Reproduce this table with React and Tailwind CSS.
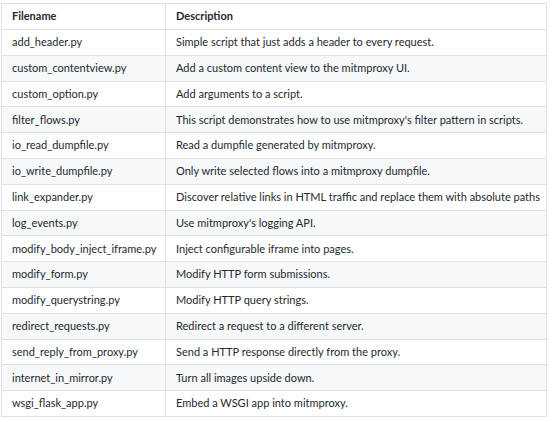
const rows = [
  ['add_header.py', 'Simple script that just adds a header to every request.'],
  ['custom_contentview.py', 'Add a custom content view to the mitmproxy UI.'],
  ['custom_option.py', 'Add arguments to a script.'],
  ['filter_flows.py', "This script demonstrates how to use mitmproxy's filter pattern in scripts."],
  ['io_read_dumpfile.py', 'Read a dumpfile generated by mitmproxy.'],
  ['io_write_dumpfile.py', 'Only write selected flows into a mitmproxy dumpfile.'],
  ['link_expander.py', 'Discover relative links in HTML traffic and replace them with absolute paths'],
  ['log_events.py', "Use mitmproxy's logging API."],
  ['modify_body_inject_iframe.py', 'Inject configurable iframe into pages.'],
  ['modify_form.py', 'Modify HTTP form submissions.'],
  ['modify_querystring.py', 'Modify HTTP query strings.'],
  ['redirect_requests.py', 'Redirect a request to a different server.'],
  ['send_reply_from_proxy.py', 'Send a HTTP response directly from the proxy.'],
  ['internet_in_mirror.py', 'Turn all images upside down.'],
  ['wsgi_flask_app.py', 'Embed a WSGI app into mitmproxy.'],
];

export default function App() {
  return (
    <div className="w-[554px] h-[422px] bg-white pt-[3px] pl-[1px] font-['Lato',sans-serif] text-[11px] text-[#24292e]">
      <table className="w-[546px] table-fixed border-collapse">
        <thead>
          <tr className="h-[26px]">
            <th className="border border-[#dfe2e5] w-[164px] pl-[10px] text-left font-bold">Filename</th>
            <th className="border border-[#dfe2e5] pl-[10px] text-left font-bold">Description</th>
          </tr>
        </thead>
        <tbody>
          {rows.map(([file, desc], i) => (
            <tr key={file} className={i % 2 === 1 ? 'h-[25.8px] bg-[#f6f8fa]' : 'h-[25.8px] bg-white'}>
              <td className="border border-[#dfe2e5] pl-[10px] whitespace-nowrap">{file}</td>
              <td className="border border-[#dfe2e5] pl-[10px] whitespace-nowrap">{desc}</td>
            </tr>
          ))}
        </tbody>
      </table>
    </div>
  );
}
